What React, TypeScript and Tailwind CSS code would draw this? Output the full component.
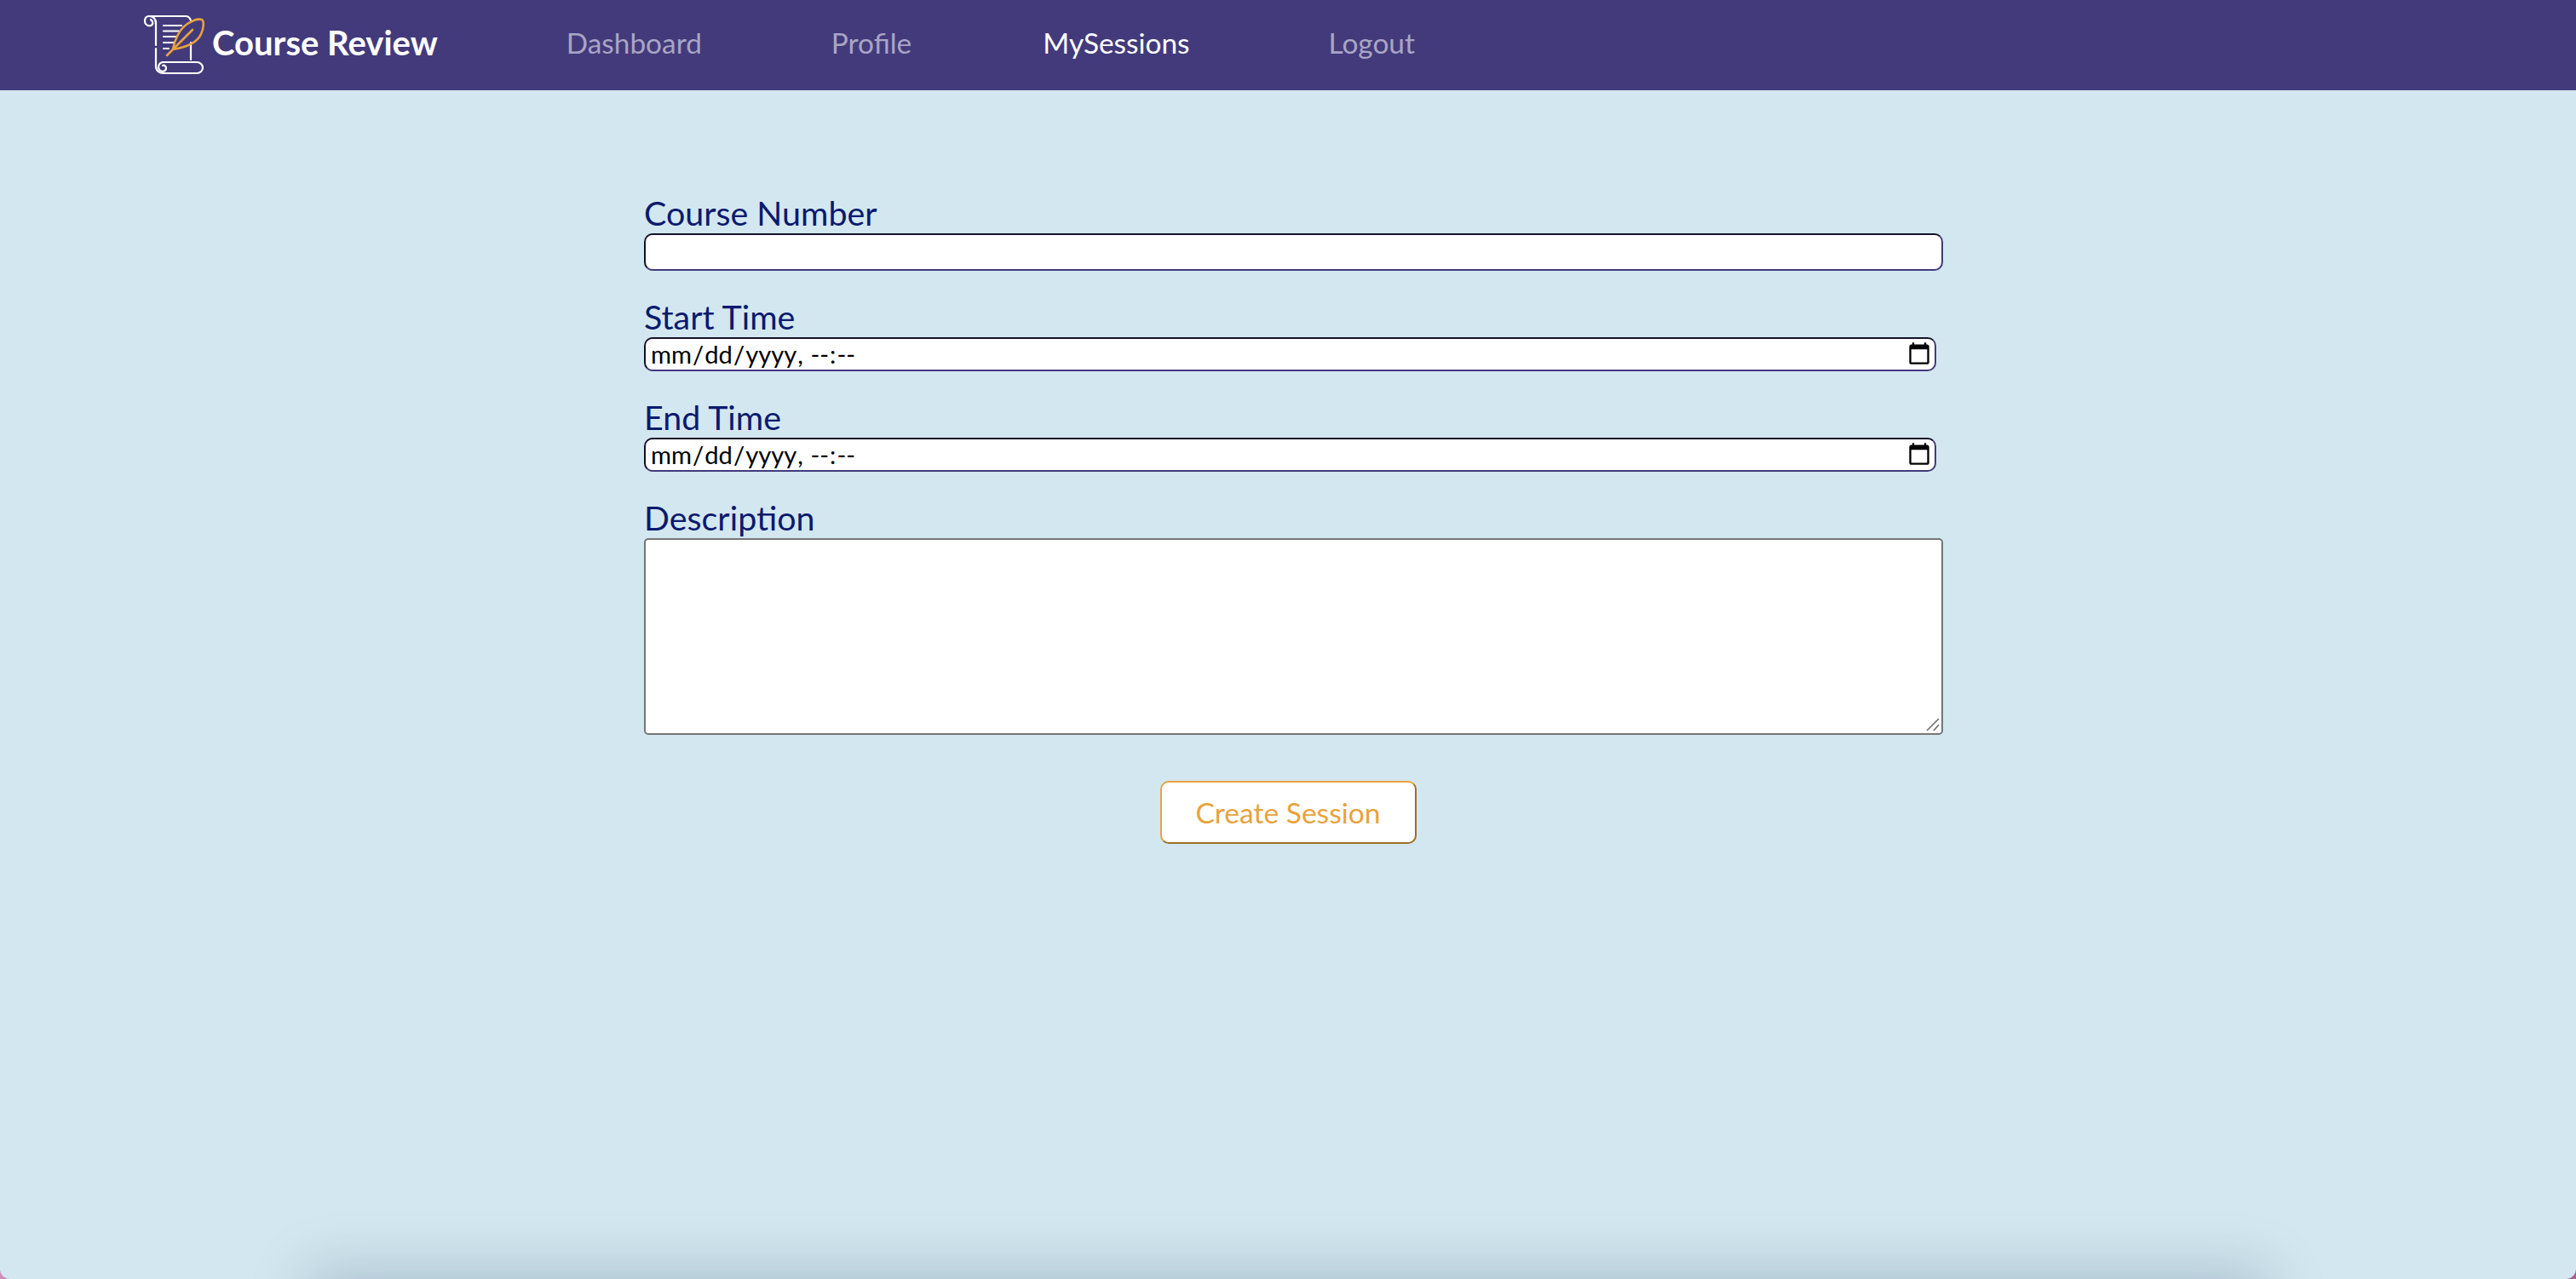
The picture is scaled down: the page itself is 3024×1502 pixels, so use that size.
const navLinks = [
  { label: "Dashboard", className: "ml-[151px] text-[#a9a5c4]" },
  { label: "Profile", className: "ml-[152px] text-[#a9a5c4]" },
  { label: "MySessions", className: "ml-[154px] text-white" },
  { label: "Logout", className: "ml-[163px] text-[#a9a5c4]" },
];

const dateInputClass =
  "block h-[40px] w-[1517px] rounded-[10px] border-2 border-[#433a7c] border-t-[#14122a] border-l-[#14122a] bg-white pl-[5px] text-[29.2px] text-black [&::-webkit-datetime-edit-ampm-field]:hidden [&::-webkit-datetime-edit-text:last-of-type]:hidden [&::-webkit-calendar-picker-indicator]:mr-[3px] [&::-webkit-calendar-picker-indicator]:h-[30px] [&::-webkit-calendar-picker-indicator]:w-[30px] [&::-webkit-calendar-picker-indicator]:p-0";

function Logo() {
  return (
    <svg viewBox="0 0 100 90" className="h-[90px] w-[100px] shrink-0" fill="none" strokeLinecap="round" strokeLinejoin="round">
      <g stroke="#ffffff" strokeWidth="2.2">
        <path d="M23 20 C23 13 19 11 15 11 C11 11 10 14 10 17 C10 21 14 23 17 22 C20 21 20 17 17 15" />
        <path d="M15 11 H58 C61 11 63 13 64 16" />
        <path d="M23 17 V45" />
        <path d="M23 49 V70 C23 75 27 78 32 78 H71 C75 78 78 75 78 71.5 C78 68 75 65 71 65 H31" />
        <path d="M31 65 C26 66 25 71 27 74 C30 77 35 76 35 72 C35 70 33 68 31 69" />
        <path d="M64 42 V62" />
        <path d="M32 22 H53" />
        <path d="M32 28.5 H50" />
        <path d="M32 35 H47" />
        <path d="M32 42 H44" />
        <path d="M32 49 H38" />
      </g>
      <g stroke="#e8a33d" strokeWidth="2.6">
        <path d="M36 57 L66 27" />
        <path d="M43 50 C45 38 51 26 60 20 C66 16 73 14 77 15 C80 17 79 26 76 32 C72 41 62 47 43 50 Z" />
      </g>
    </svg>
  );
}

function Field({ label, children, last }: { label: string; children: React.ReactNode; last?: boolean }) {
  return (
    <div className={last ? "" : "mb-[30px]"}>
      <label className="block h-[48px] text-[39.4px] leading-[48px] text-[#0b1a6e]">{label}</label>
      {children}
    </div>
  );
}

export default function App() {
  return (
    <div className="h-[1502px] w-full overflow-hidden bg-gradient-to-r from-[#d08fb8] to-[#a8628c] font-['Lato',sans-serif]">
      <div className="relative h-full w-full overflow-hidden rounded-b-[12px] bg-[#d3e7f0]">
        <header className="flex h-[106px] items-center bg-[#433a7c] pl-[160px]">
          <Logo />
          <span className="-ml-[11px] -mt-[6px] text-[40px] font-bold text-white">Course Review</span>
          {navLinks.map((link) => (
            <a key={link.label} className={`-mt-[6px] text-[33.4px] ${link.className}`}>
              {link.label}
            </a>
          ))}
        </header>

        <main className="flex flex-col items-center pt-[120px]">
          <form className="ml-[13px] w-[1525px]">
            <Field label="Course Number">
              <input
                type="text"
                className="block h-[44px] w-full rounded-[10px] border-2 border-[#433a7c] border-t-[#14122a] border-l-[#14122a] bg-white"
              />
            </Field>
            <Field label="Start Time">
              <input type="datetime-local" className={dateInputClass} />
            </Field>
            <Field label="End Time">
              <input type="datetime-local" className={dateInputClass} />
            </Field>
            <Field label="Description" last>
              <div className="relative">
                <textarea className="block h-[231px] w-full resize-none rounded-[5px] border-2 border-[#767676] bg-white" />
                <svg viewBox="0 0 20 20" className="absolute bottom-[2px] right-[2px] h-[20px] w-[20px]" stroke="#6e6e6e" strokeWidth="1.6">
                  <path d="M3 17 L17 3" />
                  <path d="M11 17 L17 10" />
                </svg>
              </div>
            </Field>
          </form>
          <button
            type="button"
            className="mt-[54px] h-[74px] w-[301px] rounded-[10px] border-2 border-[#e8a33d] border-r-[#9c6f2a] border-b-[#9c6f2a] bg-white text-[33.6px] text-[#e8a33d]"
          >
            Create Session
          </button>
        </main>

        <div className="absolute left-[380px] top-[1512px] h-[60px] w-[2264px] shadow-[0_0_70px_20px_rgba(0,40,70,0.2)]" />
      </div>
    </div>
  );
}
